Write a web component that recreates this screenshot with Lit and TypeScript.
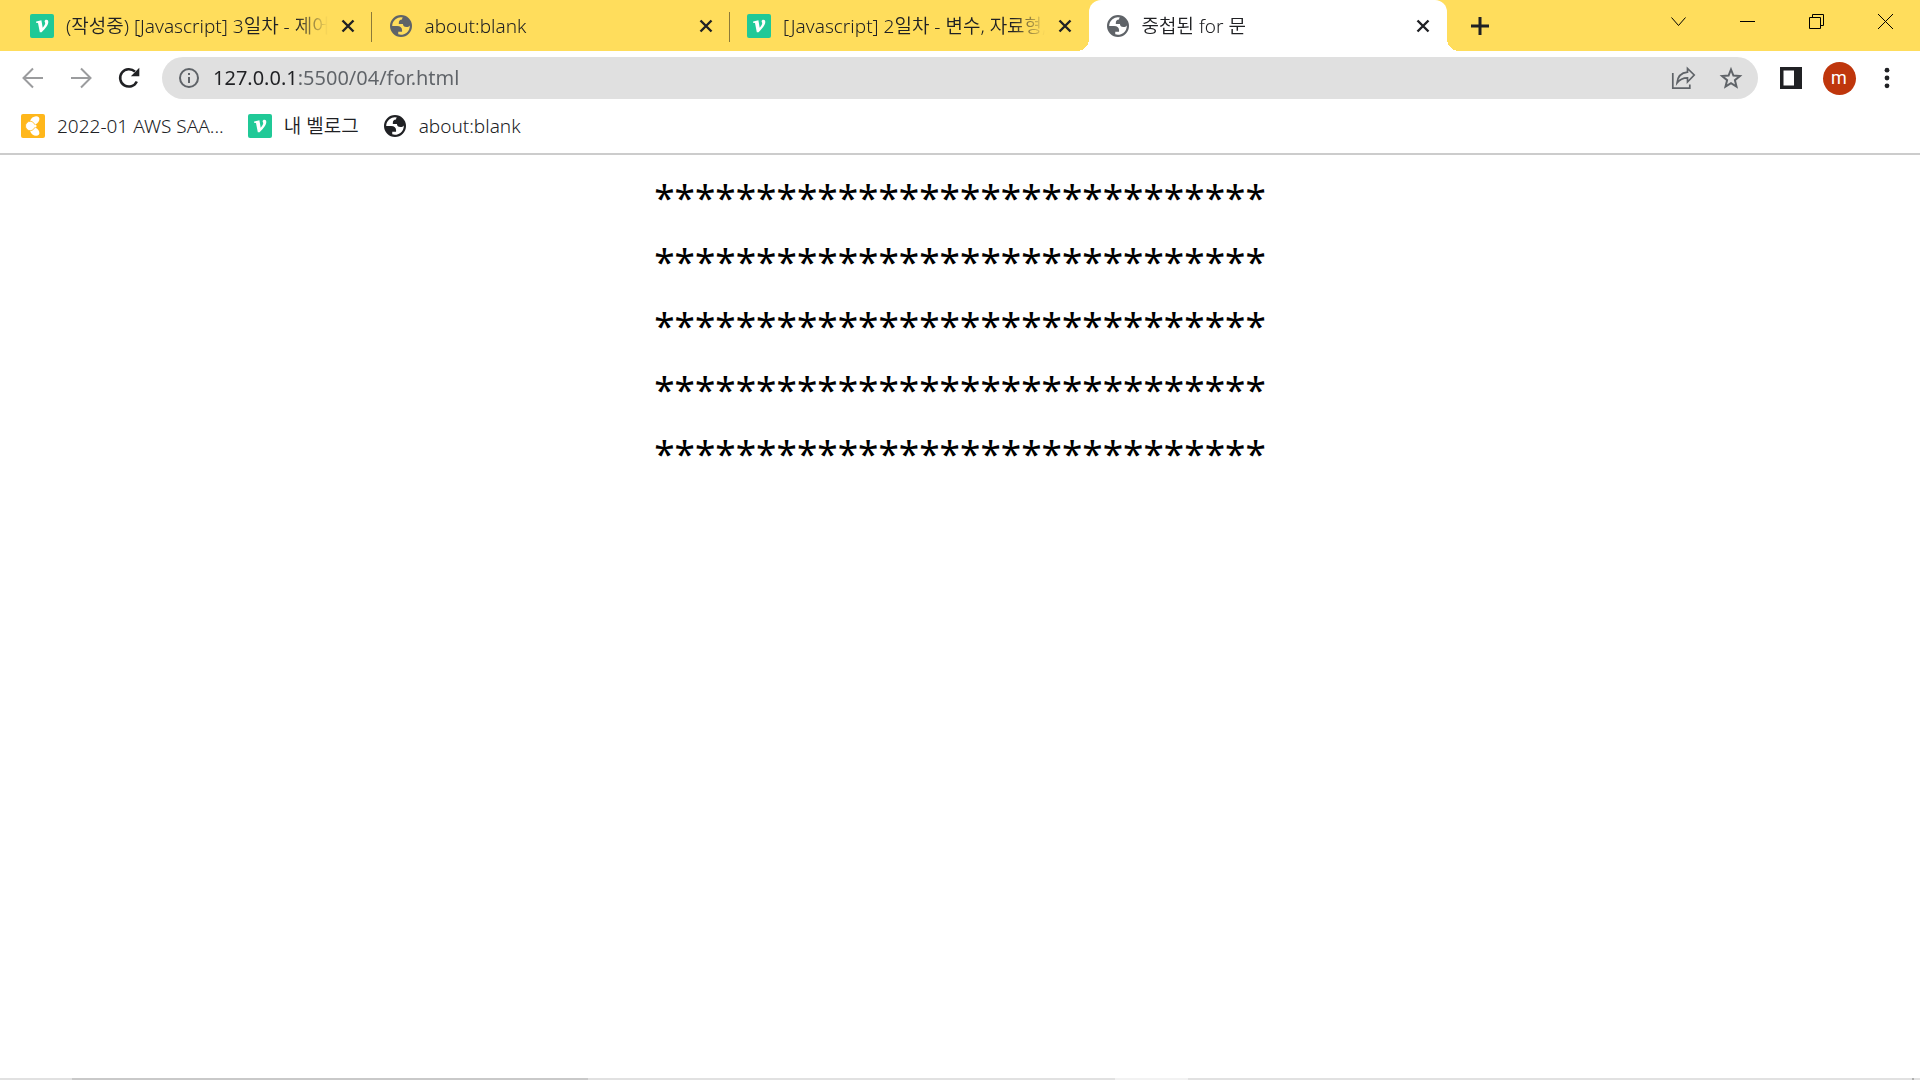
import { LitElement, html, css, svg } from "lit";
import { customElement, state } from "lit/decorators.js";
import { classMap } from "lit/directives/class-map.js";

type IconName = "velog" | "globe" | "course";

interface Tab {
  icon: IconName;
  title: string;
}

interface Bookmark {
  icon: IconName;
  label: string;
  href: string;
}

const TABS: Tab[] = [
  { icon: "velog", title: "(작성중) [Javascript] 3일차 - 제어" },
  { icon: "globe", title: "about:blank" },
  { icon: "velog", title: "[Javascript] 2일차 - 변수, 자료형," },
  { icon: "globe", title: "중첩된 for 문" },
];

const BOOKMARKS: Bookmark[] = [
  { icon: "course", label: "2022-01 AWS SAA...", href: "#course" },
  { icon: "velog", label: "내 벨로그", href: "#velog" },
  { icon: "globe", label: "about:blank", href: "about:blank" },
];

const ROWS = 5;
const STARS = 30;

const siteIcons = {
  velog: svg`
    <rect width="24" height="24" rx="2" fill="#20c997" />
    <path d="M6 8.800L6.200 7.600 11.400 6.200 12.700 13.700C14.500 11.700 15.200 10.400 15.200 9.300 15.200 8.500 14.600 8.100 14.600 7.300 14.600 6.400 15.400 5.800 16.400 5.800 17.600 5.800 18.300 6.700 18.300 8 18.300 10.800 15.600 14.400 11.600 18.200H9.800L8 8.900Z" fill="#fff" />`,
  globe: svg`
    <path fill="currentColor" fill-rule="evenodd" d="M12 1a11 11 0 1 0 0 22 11 11 0 0 0 0-22zM3.200 12h4.840c3.750.020 5.410 1.900 5 5.640H9.240v2.720a8.800 8.800 0 0 0 11.540-8.900C20.060 12.550 18.970 13.100 17.500 13.100c-2.350 0-3.530-1.010-3.530-3.030h-4.120c-.300-3 .750-4.500 3.160-4.500 0-1.070.360-1.760.890-2.170A8.800 8.800 0 0 0 3.200 12z" />`,
  course: svg`
    <rect width="24" height="24" rx="2" fill="#ffb71b" />
    <g fill="#fff">
      <ellipse cx="13.700" cy="6.500" rx="5.200" ry="3.700" transform="rotate(-38 13.700 6.500)" />
      <ellipse cx="13.700" cy="17.500" rx="5.200" ry="3.700" transform="rotate(38 13.700 17.500)" />
      <circle cx="9.200" cy="12" r="4.700" stroke="#ffb71b" stroke-width=".8" />
      <circle cx="14" cy="12" r="1.600" />
    </g>`,
};

@customElement("app-root")
export class AppRoot extends LitElement {
  @state() private active = 3;

  static styles = css`
    :host {
      display: flex;
      flex-direction: column;
      min-height: 100vh;
      background: #fff;
      color: #202124;
      font-family: "Noto Sans", "Noto Sans CJK KR", sans-serif;
      font-size: 19px;
      line-height: 24px;
    }
    button {
      display: flex;
      align-items: center;
      justify-content: center;
      padding: 0;
      border: 0;
      background: none;
      color: inherit;
      font: inherit;
    }
    svg {
      display: block;
      flex: none;
    }
    .site {
      width: 24px;
      height: 24px;
    }

    .titlebar {
      display: flex;
      height: 51px;
      padding-left: 13px;
      background: #ffdd5c;
    }
    .tabs {
      display: flex;
      flex: 0 1 1434px;
      min-width: 0;
    }
    .tab {
      position: relative;
      display: flex;
      align-items: center;
      flex: 1 1 0;
      min-width: 0;
      padding: 0 12px 0 17px;
      box-sizing: border-box;
    }
    .tab.divided::after {
      content: "";
      position: absolute;
      right: 0;
      top: 12px;
      width: 1px;
      height: 30px;
      background: #8c7a38;
    }
    .tab.active {
      border-radius: 12px 12px 0 0;
      background: #fff;
    }
    .tab.active::before,
    .tab.active::after {
      content: "";
      position: absolute;
      bottom: 0;
      width: 12px;
      height: 12px;
    }
    .tab.active::before {
      right: 100%;
      background: radial-gradient(circle at 0 0, transparent 12px, #fff 12px);
    }
    .tab.active::after {
      left: 100%;
      background: radial-gradient(circle at 100% 0, transparent 12px, #fff 12px);
    }
    .tab-select {
      flex: 1;
      min-width: 0;
      height: 100%;
      justify-content: flex-start;
      gap: 12px;
    }
    .tab-select .site {
      color: #5f6368;
    }
    .tab-title {
      flex: 1;
      min-width: 0;
      overflow: hidden;
      white-space: nowrap;
      text-align: left;
      font-weight: 345;
      mask-image: linear-gradient(90deg, #000 calc(100% - 32px), transparent);
    }
    .tab-close {
      flex: none;
      width: 24px;
      height: 24px;
      margin-left: 8px;
    }
    .new-tab {
      width: 48px;
      margin-left: 9px;
    }
    .window-controls {
      display: flex;
      height: 42px;
      margin-left: auto;
      color: #000;
    }
    .window-controls button {
      width: 69px;
    }

    .toolbar {
      display: flex;
      align-items: center;
      padding: 6px 9px 8px;
    }
    .tool {
      flex: none;
      width: 48px;
      height: 42px;
    }
    .tool.muted {
      color: #9b9c9e;
    }
    .omnibox {
      display: flex;
      align-items: center;
      flex: 1;
      min-width: 0;
      height: 42px;
      margin: 0 9px;
      padding: 0 3px 0 15px;
      border-radius: 21px;
      box-sizing: border-box;
      background: #e0e0e0;
      color: #5f6368;
    }
    .address {
      flex: 1;
      min-width: 0;
      height: 30px;
      margin-left: 12px;
      padding: 0;
      border: 0;
      outline: 0;
      font: inherit;
      font-size: 20px;
      line-height: 30px;
      color: transparent;
      background: linear-gradient(90deg, #202124 83px, #5f6368 83px);
      -webkit-background-clip: text;
      background-clip: text;
    }
    .avatar {
      display: flex;
      align-items: center;
      justify-content: center;
      width: 33px;
      height: 33px;
      border-radius: 50%;
      background: #bf360c;
      color: #fff;
      font-family: Roboto, sans-serif;
      font-size: 18px;
    }

    .bookmarks {
      display: flex;
      align-items: center;
      gap: 24px;
      padding: 7px 21px 15px;
      border-bottom: 2px solid #ccc;
    }
    .bookmark {
      display: flex;
      align-items: center;
      gap: 12px;
      color: inherit;
      text-decoration: none;
      white-space: nowrap;
      font-weight: 345;
    }

    .page {
      flex: 1;
      padding-top: 10px;
      text-align: center;
      color: #000;
    }
    .row {
      margin: 0;
      font-size: 37px;
      line-height: 64px;
      font-weight: 375;
    }

    .edge {
      display: flex;
      height: 2px;
      background: #e1e1e1;
    }
    .edge-gap {
      flex: 72;
    }
    .edge-search {
      flex: 516;
      background: #c9c9c9;
    }
    .edge-space {
      flex: 527;
    }
    .edge-item {
      flex: 73;
      background: #f2f2f2;
    }
    .edge-tray {
      flex: 724;
      border-right: 2px solid #b0b0b0;
    }
    .edge-end {
      flex: 6;
    }
  `;

  private siteIcon(name: IconName) {
    return html`<svg class="site" viewBox="0 0 24 24" aria-hidden="true">${siteIcons[name]}</svg>`;
  }

  private renderTab(tab: Tab, index: number) {
    const active = index === this.active;
    const divided = !active && index + 1 !== this.active;
    return html`
      <div class=${classMap({ tab: true, active, divided })}>
        <button class="tab-select" @click=${() => (this.active = index)}>
          ${this.siteIcon(tab.icon)}
          <span class="tab-title">${tab.title}</span>
        </button>
        <button class="tab-close" aria-label="닫기">
          <svg width="14" height="14" viewBox="0 0 14 14" fill="none" stroke="currentColor" stroke-width="2.400">
            <path d="M1.500 1.500l11 11M12.500 1.500l-11 11" />
          </svg>
        </button>
      </div>
    `;
  }

  render() {
    return html`
      <header>
        <div class="titlebar">
          <nav class="tabs">${TABS.map((tab, i) => this.renderTab(tab, i))}</nav>
          <button class="new-tab" aria-label="새 탭">
            <svg width="18" height="18" viewBox="0 0 18 18" stroke="currentColor" stroke-width="3">
              <path d="M0 9h18M9 0v18" />
            </svg>
          </button>
          <div class="window-controls">
            <button aria-label="탭 검색">
              <svg width="15" height="15" viewBox="0 0 15 15" fill="none" stroke="currentColor">
                <path d="M.5 3.500l7 8 7-8" />
              </svg>
            </button>
            <button aria-label="최소화">
              <svg width="15" height="15" viewBox="0 0 15 15" stroke="currentColor">
                <path d="M0 7.500h15" />
              </svg>
            </button>
            <button aria-label="이전 크기로 복원">
              <svg width="15" height="15" viewBox="0 0 15 15" fill="none" stroke="currentColor">
                <path d="M.5 3.500h11v11H.5zM3.500 3.500v-3h11v11h-3" />
              </svg>
            </button>
            <button aria-label="창 닫기">
              <svg width="15" height="15" viewBox="0 0 15 15" fill="none" stroke="currentColor">
                <path d="M0 0l15 15M15 0L0 15" />
              </svg>
            </button>
          </div>
        </div>

        <div class="toolbar">
          <button class="tool muted" aria-label="뒤로">
            <svg width="30" height="30" viewBox="0 0 30 30" fill="none" stroke="currentColor" stroke-width="2">
              <path d="M25 15H6M15 5.500L5.500 15l9.500 9.500" />
            </svg>
          </button>
          <button class="tool muted" aria-label="앞으로">
            <svg width="30" height="30" viewBox="0 0 30 30" fill="none" stroke="currentColor" stroke-width="2">
              <path d="M5 15h19M15 5.500l9.500 9.500-9.500 9.500" />
            </svg>
          </button>
          <button class="tool" aria-label="새로고침">
            <svg width="30" height="30" viewBox="0 0 30 30">
              <path d="M22.800 18.500A8.700 8.700 0 1 1 21 8.700" fill="none" stroke="currentColor" stroke-width="2.500" />
              <path d="M25.300 4.800v8.400h-8.400z" fill="currentColor" />
            </svg>
          </button>

          <div class="omnibox">
            <svg width="24" height="24" viewBox="0 0 24 24" aria-hidden="true">
              <circle cx="12" cy="12" r="9" fill="none" stroke="currentColor" stroke-width="2" />
              <path d="M11 11h2v6h-2zM11 7h2v2h-2z" fill="currentColor" />
            </svg>
            <input class="address" aria-label="주소창" spellcheck="false" .value=${"127.0.0.1:5500/04/for.html"} />
            <button class="tool" aria-label="공유">
              <svg width="26" height="26" viewBox="0 0 26 26" fill="none" stroke="currentColor" stroke-width="1.700">
                <path d="M2.800 8v15.200h17V19.500" />
                <path d="M17.500 3.500v3.700C11 7.800 7.600 11.800 7 18c2.600-3.600 5.700-5.200 10.500-5.200V17l6.700-7z" />
              </svg>
            </button>
            <button class="tool" aria-label="북마크에 추가">
              <svg width="24" height="24" viewBox="0 0 24 24" fill="none" stroke="currentColor" stroke-width="2">
                <path d="M12 3.500l2.400 6 6.500.500-5 4.200 1.600 6.400-5.500-3.500-5.500 3.500 1.600-6.400-5-4.200 6.500-.500z" />
              </svg>
            </button>
          </div>

          <button class="tool" aria-label="측면 패널">
            <svg width="22" height="22" viewBox="0 0 22 22">
              <path d="M0 0h22v22H0zM3.500 3.500v15h10.500v-15z" fill="currentColor" fill-rule="evenodd" />
            </svg>
          </button>
          <button class="tool" aria-label="프로필">
            <span class="avatar">m</span>
          </button>
          <button class="tool" aria-label="메뉴">
            <svg width="6" height="22" viewBox="0 0 6 22" fill="currentColor">
              <circle cx="3" cy="3.200" r="2.400" />
              <circle cx="3" cy="11" r="2.400" />
              <circle cx="3" cy="18.800" r="2.400" />
            </svg>
          </button>
        </div>

        <nav class="bookmarks">
          ${BOOKMARKS.map(
            (b) => html`<a class="bookmark" href=${b.href}>${this.siteIcon(b.icon)}<span>${b.label}</span></a>`
          )}
        </nav>
      </header>

      <main class="page">
        ${Array.from({ length: ROWS }, () => html`<p class="row">${"*".repeat(STARS)}</p>`)}
      </main>

      <div class="edge" aria-hidden="true">
        <div class="edge-gap"></div>
        <div class="edge-search"></div>
        <div class="edge-space"></div>
        <div class="edge-item"></div>
        <div class="edge-tray"></div>
        <div class="edge-end"></div>
      </div>
    `;
  }
}
